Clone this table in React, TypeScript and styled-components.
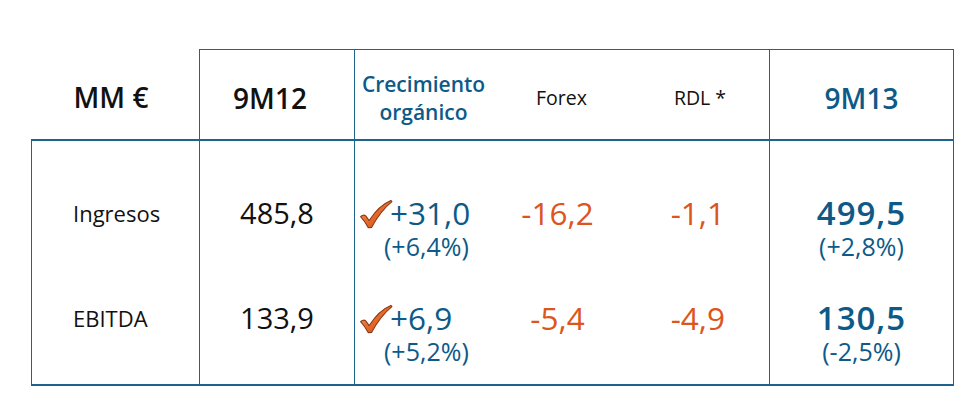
import React from "react"
import styled, { createGlobalStyle } from "styled-components"

const BLUE = "#0d5a88"
const ORANGE = "#dc561c"
const LINE = "#1f628b"

const GlobalStyle = createGlobalStyle`
  html, body {
    margin: 0;
    padding: 0;
    background: #ffffff;
    font-family: "Open Sans", "DejaVu Sans", sans-serif;
    color: #111111;
  }
`

const Page = styled.div`
  width: 972px;
  height: 408px;
  padding: 49px 0 0 31px;
  box-sizing: border-box;
`

const Table = styled.div`
  display: grid;
  grid-template-columns: 168px 155px 138px 139px 138px 185px;
  grid-template-rows: 90px auto auto;
`

type CellProps = {
  $top?: number
  $left?: boolean
  $right?: boolean
  $bottom?: number
  $align?: "center" | "left" | "right"
  $pad?: string
}

const Cell = styled.div<CellProps>`
  box-sizing: border-box;
  display: flex;
  flex-direction: column;
  align-items: ${({ $align }) => ($align === "left" ? "flex-start" : $align === "right" ? "flex-end" : "center")};
  border-top: ${({ $top }) => ($top ? `${$top}px solid ${LINE}` : "none")};
  border-bottom: ${({ $bottom }) => ($bottom ? `${$bottom}px solid ${LINE}` : "none")};
  border-left: ${({ $left }) => ($left ? `1px solid ${LINE}` : "none")};
  border-right: ${({ $right }) => ($right ? `1px solid ${LINE}` : "none")};
  padding: ${({ $pad }) => $pad ?? "0"};
`

const HeadCell = styled(Cell)`
  justify-content: center;
  padding-top: 6px;
  text-align: center;
`

const Period = styled.div<{ $blue?: boolean }>`
  font-size: 28px;
  font-weight: 600;
  color: ${({ $blue }) => ($blue ? BLUE : "#111111")};
  line-height: 36px;
`

const GrowthTitle = styled.div`
  font-size: 21px;
  font-weight: 600;
  color: ${BLUE};
  line-height: 28px;
`

const SubHead = styled.div`
  font-size: 19.5px;
  color: #111111;
  line-height: 28px;
`

const Label = styled.div`
  font-size: 22px;
  line-height: 36px;
  height: 66px;
`

const Entry = styled.div<{ $align?: "left" | "center" }>`
  display: flex;
  flex-direction: column;
  align-items: ${({ $align }) => ($align === "left" ? "flex-start" : "center")};
  height: 66px;
`

const Value = styled.div<{ $tone?: "blue" | "orange" | "black"; $size?: number; $bold?: boolean }>`
  display: flex;
  align-items: center;
  font-size: ${({ $size }) => $size ?? 31.5}px;
  font-weight: ${({ $bold }) => ($bold ? 600 : 400)};
  letter-spacing: ${({ $bold }) => ($bold ? "1px" : "0")};
  line-height: 36px;
  color: ${({ $tone }) => ($tone === "blue" ? BLUE : $tone === "orange" ? ORANGE : "#111111")};
`

const Change = styled.div<{ $indent?: number }>`
  font-size: 25px;
  line-height: 30px;
  color: ${BLUE};
  margin-left: ${({ $indent }) => $indent ?? 0}px;
`

const Tick = () => (
  <svg width="34" height="30" viewBox="0 0 32 28" style={{ marginRight: -3, marginTop: 2 }}>
    <defs>
      <linearGradient id="tickFill" x1="0" y1="0" x2="1" y2="1">
        <stop offset="0" stopColor="#f7a36c" />
        <stop offset="0.5" stopColor="#e66a2c" />
        <stop offset="1" stopColor="#c4481a" />
      </linearGradient>
    </defs>
    <path
      d="M1.5 16.5 C3 14.8 5.2 14.6 6.5 16 L9.6 20.2 C15 11.5 22 4.5 30 1.2 L31 2.4 C24 8 17.5 16.5 11.8 26.6 L8.6 26.8 C6.6 22.8 4.4 19.6 1.5 16.5 Z"
      fill="url(#tickFill)"
      stroke="#8a3812"
      strokeWidth="1"
      strokeLinejoin="round"
    />
  </svg>
)

type Row = {
  label: string
  prev: string
  growth: string
  growthPct: string
  forex: string
  rdl: string
  curr: string
  currPct: string
}

const rows: Row[] = [
  { label: "Ingresos", prev: "485,8", growth: "+31,0", growthPct: "(+6,4%)", forex: "-16,2", rdl: "-1,1", curr: "499,5", currPct: "(+2,8%)" },
  { label: "EBITDA", prev: "133,9", growth: "+6,9", growthPct: "(+5,2%)", forex: "-5,4", rdl: "-4,9", curr: "130,5", currPct: "(-2,5%)" },
]

export default function App() {
  return (
    <>
      <GlobalStyle />
      <Page>
        <Table>
          <HeadCell $pad="6px 8px 0 0">
            <Period>MM €</Period>
          </HeadCell>
          <HeadCell $top={1} $left $pad="6px 14px 0 0">
            <Period>9M12</Period>
          </HeadCell>
          <HeadCell $top={1} $left>
            <GrowthTitle>Crecimiento</GrowthTitle>
            <GrowthTitle>orgánico</GrowthTitle>
          </HeadCell>
          <HeadCell $top={1}>
            <SubHead>Forex</SubHead>
          </HeadCell>
          <HeadCell $top={1}>
            <SubHead>RDL *</SubHead>
          </HeadCell>
          <HeadCell $top={1} $left $right>
            <Period $blue>9M13</Period>
          </HeadCell>

          {rows.map((r, i) => {
            const first = i === 0
            const top = first ? 2 : undefined
            const bottom = first ? undefined : 2
            const pad = first ? "54px" : "39px"
            const padBottom = first ? "0" : "18px"
            return (
              <React.Fragment key={r.label}>
                <Cell $top={top} $bottom={bottom} $left $align="left" $pad={`${pad} 0 ${padBottom} 41px`}>
                  <Label>{r.label}</Label>
                </Cell>
                <Cell $top={top} $bottom={bottom} $left $pad={`${pad} 0 ${padBottom} 0`}>
                  <Entry>
                    <Value $size={29}>{r.prev}</Value>
                  </Entry>
                </Cell>
                <Cell $top={top} $bottom={bottom} $left $align="left" $pad={`${pad} 0 ${padBottom} 4px`}>
                  <Entry $align="left">
                    <Value $tone="blue">
                      <Tick />
                      {r.growth}
                    </Value>
                    <Change $indent={25}>{r.growthPct}</Change>
                  </Entry>
                </Cell>
                <Cell $top={top} $bottom={bottom} $pad={`${pad} 8px ${padBottom} 0`}>
                  <Entry>
                    <Value $tone="orange">{r.forex}</Value>
                  </Entry>
                </Cell>
                <Cell $top={top} $bottom={bottom} $align="right" $pad={`${pad} 44px ${padBottom} 0`}>
                  <Entry>
                    <Value $tone="orange">{r.rdl}</Value>
                  </Entry>
                </Cell>
                <Cell $top={top} $bottom={bottom} $left $right $pad={`${pad} 0 ${padBottom} 0`}>
                  <Entry>
                    <Value $tone="blue" $size={33} $bold>{r.curr}</Value>
                    <Change>{r.currPct}</Change>
                  </Entry>
                </Cell>
              </React.Fragment>
            )
          })}
        </Table>
      </Page>
    </>
  )
}
